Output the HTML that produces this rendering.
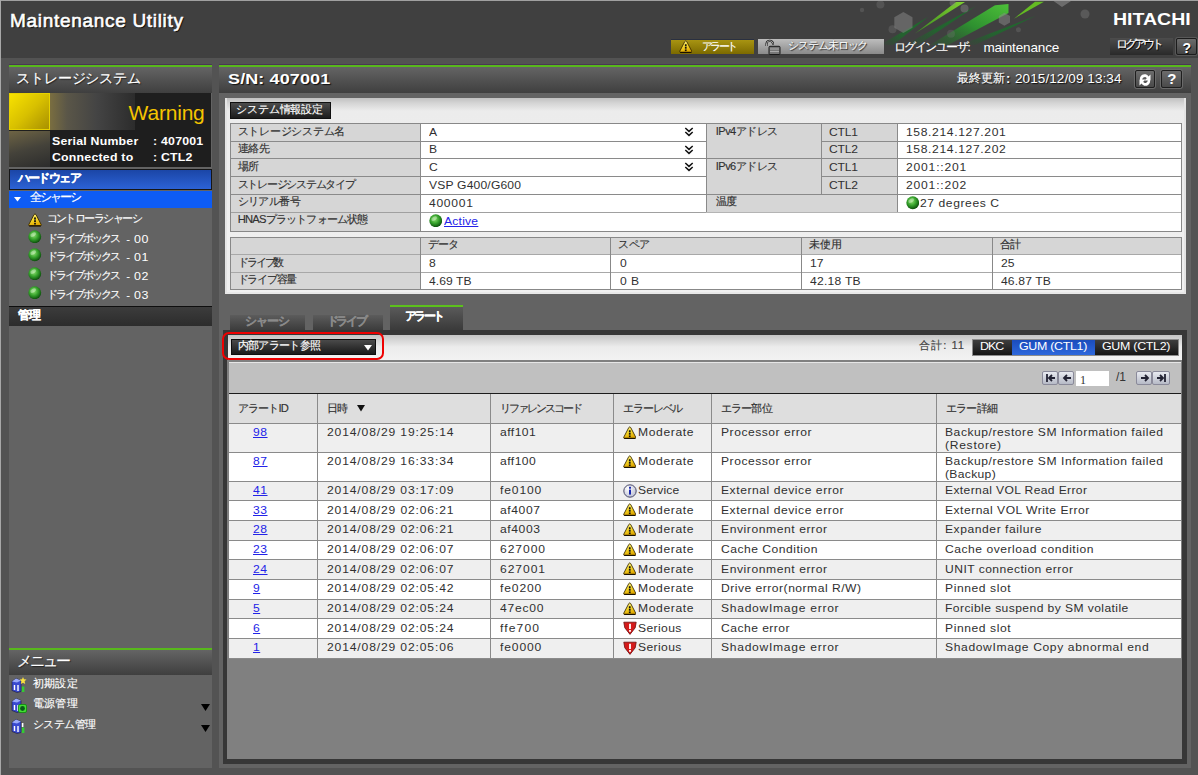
<!DOCTYPE html><html><head><meta charset="utf-8"><style>
*{margin:0;padding:0;box-sizing:border-box}
html,body{width:1198px;height:775px;overflow:hidden;background:#535353;font-family:"Liberation Sans",sans-serif;}
.a{position:absolute;white-space:nowrap}
.t{line-height:1}
.green{background:#58b81c;border-top:0.6px solid #4b3557}
.tbar{background:linear-gradient(#646464,#3f3f3f)}
.lnk{text-decoration:underline}
.sh{text-shadow:1px 1px 1px #111}
</style></head><body>
<div class="a " style="left:0.00px;top:0.00px;width:1198.00px;height:58.00px;background:#404040;border-top:1px solid #a0a0a0;border-left:1px solid #a0a0a0"></div>
<div class="a t " id="t1" style="left:10.00px;top:10.50px;font-size:19px;color:#fff;text-shadow:1px 1px 1px #000;-webkit-text-stroke:0.6px #fff;letter-spacing:0.693px;">Maintenance Utility</div>
<svg class="a" style="left:840px;top:1px" width="260" height="57" viewBox="840 1 260 57">
<defs>
<linearGradient id="gb" x1="0" y1="1" x2="1" y2="0"><stop offset="0" stop-color="#3a8a20"/><stop offset="1" stop-color="#80d030"/></linearGradient>
<linearGradient id="gd" x1="0" y1="1" x2="1" y2="0"><stop offset="0" stop-color="#1e5a28" stop-opacity="0.0"/><stop offset="0.4" stop-color="#1e6a2c" stop-opacity="0.8"/><stop offset="1" stop-color="#1e6a2c"/></linearGradient>
<linearGradient id="gm" x1="0" y1="1" x2="1" y2="0"><stop offset="0" stop-color="#1f6a28" stop-opacity="0.2"/><stop offset="0.5" stop-color="#2e9030"/><stop offset="1" stop-color="#4cc038"/></linearGradient>
</defs>
<polygon points="880,45 893,45 928,17" fill="url(#gd)"/>
<polygon points="915,33.5 956,2 965,2" fill="url(#gb)"/>
<polygon points="905,45 918,45 976,6" fill="url(#gd)"/>
<polygon points="930,45 948,45 1008.5,13 1008.5,4 995,5.3" fill="url(#gm)"/>
<polygon points="960,45 975,45 1036,15.8" fill="url(#gd)"/>
<polygon points="1014,18.7 1044,1.8 1035,1.8" fill="#64bc22"/>
<polygon points="903.4,12 912.5,17.2 912.5,27.7 903.4,33 894.3,27.7 894.3,17.2" fill="#8a8a8a" opacity="0.5"/>
<polygon points="1004.4,12.8 1010,16 1010,22.6 1004.4,25.8 998.8,22.6 998.8,16" fill="#8a8a8a" opacity="0.5"/>
<circle cx="880.4" cy="4.6" r="4" fill="#777" opacity="0.35"/>
<circle cx="892.5" cy="29.2" r="4" fill="#777" opacity="0.35"/>
<circle cx="951" cy="33.8" r="4" fill="#777" opacity="0.3"/>
<circle cx="964.5" cy="8.5" r="4" fill="#888" opacity="0.45"/>
<circle cx="952.6" cy="2.9" r="3" fill="#888" opacity="0.4"/>
<circle cx="1018.4" cy="29.8" r="2.5" fill="#777" opacity="0.35"/>
<circle cx="1085" cy="14" r="4.5" fill="#777" opacity="0.45"/>
<circle cx="862" cy="10" r="2.2" fill="#777" opacity="0.35"/>
<polygon points="1053.5,1 1071,1 1062,7" fill="#8a8a8a" opacity="0.6"/>
</svg>
<div class="a t " style="left:1113.00px;top:12.30px;font-size:16px;font-weight:bold;color:#fff;transform:scaleX(1.22);transform-origin:0 0;">HITACHI</div>
<div class="a " style="left:670.80px;top:38.50px;width:83.60px;height:15.50px;background:linear-gradient(#a89412,#7c6a00);border-top:1px solid #2a3040"></div>
<svg class="a" style="left:678.50px;top:40.00px" width="13.5" height="13.5" viewBox="0 0 14 14"><defs><linearGradient id="wg1" x1="0" y1="0" x2="0.3" y2="1"><stop offset="0" stop-color="#fff9a8"/><stop offset="0.5" stop-color="#f8dc30"/><stop offset="1" stop-color="#e0a800"/></linearGradient></defs><path d="M6,1.6 Q7,0.2 8,1.6 L13.2,11.6 Q13.6,12.8 12.4,12.8 L1.6,12.8 Q0.4,12.8 0.8,11.6 Z" fill="url(#wg1)" stroke="#3a2a00" stroke-width="0.9"/><path d="M1.2,12.9 L12.8,12.9" stroke="#1a1000" stroke-width="1.2"/><rect x="6.1" y="4.4" width="1.8" height="2.2" fill="#111"/><rect x="6.1" y="7.2" width="1.8" height="1.8" fill="#111"/><rect x="6.1" y="9.8" width="1.8" height="1.7" fill="#111"/></svg>
<div class="a t " id="t2" style="left:701.60px;top:40.50px;font-size:11.2px;color:#fff;-webkit-text-stroke:0.15px #fff;letter-spacing:-2.468px;">アラート</div>
<div class="a " style="left:758.00px;top:38.70px;width:126.00px;height:15.20px;background:linear-gradient(#bdbdbd,#8a8a8a)"></div>
<svg class="a" style="left:764.00px;top:38.50px" width="17" height="16" viewBox="0 0 17 16"><path d="M2.5,7 L2.5,4.5 A3.3,3.3 0 0 1 9,4.5 L9,6" fill="none" stroke="#111" stroke-width="2"/><path d="M2.5,7 L2.5,4.5 A3.3,3.3 0 0 1 9,4.5 L9,6" fill="none" stroke="#e8e8e8" stroke-width="0.7"/><rect x="5" y="7.3" width="11" height="8.2" rx="1" fill="#777" stroke="#1a1a1a" stroke-width="1"/><rect x="6" y="9.5" width="9" height="1" fill="#aaa"/><rect x="6" y="12" width="9" height="1" fill="#aaa"/></svg>
<div class="a t " id="t3" style="left:788.30px;top:40.40px;font-size:11.2px;color:#fff;text-shadow:1px 1px 1px #222,0 0 1px #444;-webkit-text-stroke:0.15px #fff;letter-spacing:-1.129px;">システム未ロック</div>
<div class="a t " id="t4" style="left:894.00px;top:42.00px;font-size:11.5px;color:#fff;-webkit-text-stroke:0.15px #fff;letter-spacing:-1.514px;">ログインユーザ:</div>
<div class="a t " id="t5" style="left:983.40px;top:40.70px;font-size:13.5px;color:#fff;letter-spacing:-0.142px;">maintenance</div>
<div class="a " style="left:1110.00px;top:38.00px;width:62.80px;height:16.50px;background:linear-gradient(#4c4c4c,#2a2a2a)"></div>
<div class="a t " id="t6" style="left:1116.00px;top:38.80px;font-size:11.5px;color:#fff;text-shadow:1px 1px 0 #000;-webkit-text-stroke:0.15px #fff;letter-spacing:-3.051px;">ログアウト</div>
<div class="a " style="left:1176.00px;top:38.00px;width:20.60px;height:16.50px;background:linear-gradient(#6c6c6c,#444);border:1px solid #1c1c1c;border-radius:2px;box-shadow:0 0 0 1px #585858"></div>
<div class="a t " style="left:1182.50px;top:40.50px;font-size:14px;font-weight:bold;color:#fff;text-shadow:1px 1px 0 #111;">?</div>
<div class="a " style="left:9.00px;top:65.00px;width:203.00px;height:702.50px;background:#636363"></div>
<div class="a green" style="left:9.00px;top:64.30px;width:203.00px;height:3.30px;"></div>
<div class="a tbar" style="left:9.00px;top:67.00px;width:203.00px;height:26.00px;"></div>
<div class="a t " id="t7" style="left:16.40px;top:71.00px;font-size:14px;color:#fff;text-shadow:1px 1px 1px #222;-webkit-text-stroke:0.15px #fff;letter-spacing:-0.200px;">ストレージシステム</div>
<div class="a " style="left:9.00px;top:93.00px;width:202.00px;height:74.00px;background:#1e1e1e"></div>
<div class="a " style="left:50.00px;top:93.00px;width:85.00px;height:37.00px;background:linear-gradient(90deg,#7a6e40,#5a5648 20%,#444 55%,#2c2c2c)"></div>
<div class="a " style="left:9.00px;top:130.50px;width:41.00px;height:36.50px;background:linear-gradient(165deg,#6e6444,#44423a 50%,#2c2c2c)"></div>
<div class="a " style="left:9.00px;top:93.00px;width:41.00px;height:37.00px;background:linear-gradient(135deg,#f8e200,#d8c000 50%,#a89000);border:1.5px solid #e8d200"></div>
<div class="a t " id="t8" style="left:128.60px;top:102.40px;font-size:21px;color:#f5c400;letter-spacing:-0.203px;">Warning</div>
<div class="a t " style="left:52.30px;top:136.00px;font-size:11px;font-weight:bold;color:#fff;transform:scaleX(1.12);transform-origin:0 0;letter-spacing:0.2px;">Serial Number</div>
<div class="a t " style="left:153.00px;top:136.00px;font-size:11px;font-weight:bold;color:#fff;transform:scaleX(1.12);transform-origin:0 0;letter-spacing:0.2px;">: 407001</div>
<div class="a t " style="left:52.30px;top:152.30px;font-size:11px;font-weight:bold;color:#fff;transform:scaleX(1.12);transform-origin:0 0;letter-spacing:0.2px;">Connected to</div>
<div class="a t " style="left:153.00px;top:152.30px;font-size:11px;font-weight:bold;color:#fff;transform:scaleX(1.12);transform-origin:0 0;letter-spacing:0.2px;">: CTL2</div>
<div class="a " style="left:9.00px;top:169.00px;width:203.00px;height:21.00px;background:linear-gradient(#1b46a6,#2c62d6);border:1px solid #161616"></div>
<div class="a t " id="t9" style="left:17.60px;top:172.00px;font-size:12px;font-weight:bold;color:#fff;-webkit-text-stroke:0.2px #fff;letter-spacing:-1.560px;">ハードウェア</div>
<div class="a " style="left:9.00px;top:190.50px;width:203.00px;height:17.50px;background:#0e5cf4"></div>
<svg class="a" style="left:14.00px;top:196.50px" width="7" height="5" viewBox="0 0 7 5"><polygon points="0,0 7,0 3.5,4.5" fill="#fff"/></svg>
<div class="a t " id="t10" style="left:30.20px;top:192.00px;font-size:11.5px;color:#fff;-webkit-text-stroke:0.15px #fff;letter-spacing:-2.101px;">全シャーシ</div>
<svg class="a" style="left:28.00px;top:213.00px" width="14" height="14" viewBox="0 0 14 14"><defs><linearGradient id="wg2" x1="0" y1="0" x2="0.3" y2="1"><stop offset="0" stop-color="#fff9a8"/><stop offset="0.5" stop-color="#f8dc30"/><stop offset="1" stop-color="#e0a800"/></linearGradient></defs><path d="M6,1.6 Q7,0.2 8,1.6 L13.2,11.6 Q13.6,12.8 12.4,12.8 L1.6,12.8 Q0.4,12.8 0.8,11.6 Z" fill="url(#wg2)" stroke="#3a2a00" stroke-width="0.9"/><path d="M1.2,12.9 L12.8,12.9" stroke="#1a1000" stroke-width="1.2"/><rect x="6.1" y="4.4" width="1.8" height="2.2" fill="#111"/><rect x="6.1" y="7.2" width="1.8" height="1.8" fill="#111"/><rect x="6.1" y="9.8" width="1.8" height="1.7" fill="#111"/></svg>
<div class="a t " id="t11" style="left:46.50px;top:213.00px;font-size:11.2px;color:#fff;-webkit-text-stroke:0.15px #fff;letter-spacing:-1.511px;">コントローラシャーシ</div>
<svg class="a" style="left:28.40px;top:229.50px" width="13.5" height="13.5" viewBox="0 0 13 13"><defs><radialGradient id="gg3" cx="0.42" cy="0.38" r="0.62"><stop offset="0" stop-color="#8ee070"/><stop offset="0.55" stop-color="#34a02a"/><stop offset="1" stop-color="#0c500c"/></radialGradient></defs><circle cx="6.5" cy="6.5" r="6.2" fill="url(#gg3)"/><ellipse cx="5" cy="4.5" rx="3" ry="1.8" fill="#fff" opacity="0.35" transform="rotate(-30 5 4.5)"/></svg>
<div class="a t " id="t12" style="left:46.50px;top:232.50px;font-size:11.2px;color:#fff;-webkit-text-stroke:0.15px #fff;letter-spacing:-1.959px;">ドライブボックス</div>
<div class="a t " style="left:126.30px;top:233.50px;font-size:11.5px;color:#fff;">-</div>
<div class="a t " id="t13" style="left:134.30px;top:233.50px;font-size:11.5px;color:#fff;transform:scaleX(1.08);transform-origin:0 0;letter-spacing:0.530px;">00</div>
<svg class="a" style="left:28.40px;top:248.20px" width="13.5" height="13.5" viewBox="0 0 13 13"><defs><radialGradient id="gg4" cx="0.42" cy="0.38" r="0.62"><stop offset="0" stop-color="#8ee070"/><stop offset="0.55" stop-color="#34a02a"/><stop offset="1" stop-color="#0c500c"/></radialGradient></defs><circle cx="6.5" cy="6.5" r="6.2" fill="url(#gg4)"/><ellipse cx="5" cy="4.5" rx="3" ry="1.8" fill="#fff" opacity="0.35" transform="rotate(-30 5 4.5)"/></svg>
<div class="a t " id="t14" style="left:46.50px;top:251.20px;font-size:11.2px;color:#fff;-webkit-text-stroke:0.15px #fff;letter-spacing:-1.959px;">ドライブボックス</div>
<div class="a t " style="left:126.30px;top:252.20px;font-size:11.5px;color:#fff;">-</div>
<div class="a t " id="t15" style="left:134.30px;top:252.20px;font-size:11.5px;color:#fff;transform:scaleX(1.08);transform-origin:0 0;letter-spacing:0.530px;">01</div>
<svg class="a" style="left:28.40px;top:266.90px" width="13.5" height="13.5" viewBox="0 0 13 13"><defs><radialGradient id="gg5" cx="0.42" cy="0.38" r="0.62"><stop offset="0" stop-color="#8ee070"/><stop offset="0.55" stop-color="#34a02a"/><stop offset="1" stop-color="#0c500c"/></radialGradient></defs><circle cx="6.5" cy="6.5" r="6.2" fill="url(#gg5)"/><ellipse cx="5" cy="4.5" rx="3" ry="1.8" fill="#fff" opacity="0.35" transform="rotate(-30 5 4.5)"/></svg>
<div class="a t " id="t16" style="left:46.50px;top:269.90px;font-size:11.2px;color:#fff;-webkit-text-stroke:0.15px #fff;letter-spacing:-1.957px;">ドライブボックス</div>
<div class="a t " style="left:126.30px;top:270.90px;font-size:11.5px;color:#fff;">-</div>
<div class="a t " id="t17" style="left:134.30px;top:270.90px;font-size:11.5px;color:#fff;transform:scaleX(1.08);transform-origin:0 0;letter-spacing:0.528px;">02</div>
<svg class="a" style="left:28.40px;top:285.60px" width="13.5" height="13.5" viewBox="0 0 13 13"><defs><radialGradient id="gg6" cx="0.42" cy="0.38" r="0.62"><stop offset="0" stop-color="#8ee070"/><stop offset="0.55" stop-color="#34a02a"/><stop offset="1" stop-color="#0c500c"/></radialGradient></defs><circle cx="6.5" cy="6.5" r="6.2" fill="url(#gg6)"/><ellipse cx="5" cy="4.5" rx="3" ry="1.8" fill="#fff" opacity="0.35" transform="rotate(-30 5 4.5)"/></svg>
<div class="a t " id="t18" style="left:46.50px;top:288.60px;font-size:11.2px;color:#fff;-webkit-text-stroke:0.15px #fff;letter-spacing:-1.958px;">ドライブボックス</div>
<div class="a t " style="left:126.30px;top:289.60px;font-size:11.5px;color:#fff;">-</div>
<div class="a t " id="t19" style="left:134.30px;top:289.60px;font-size:11.5px;color:#fff;transform:scaleX(1.08);transform-origin:0 0;letter-spacing:0.532px;">03</div>
<div class="a " style="left:9.00px;top:306.00px;width:203.00px;height:20.00px;background:linear-gradient(#3c3c3c,#2c2c2c);border-top:1px solid #0e0e0e"></div>
<div class="a t " id="t20" style="left:17.50px;top:308.60px;font-size:12px;font-weight:bold;color:#fff;-webkit-text-stroke:0.2px #fff;letter-spacing:-0.209px;">管理</div>
<div class="a " style="left:9.00px;top:648.00px;width:203.00px;height:2.40px;background:#58b81c"></div>
<div class="a tbar" style="left:9.00px;top:650.40px;width:203.00px;height:25.00px;"></div>
<div class="a t " id="t21" style="left:17.30px;top:653.00px;font-size:15px;color:#fff;text-shadow:1px 1px 1px #222;-webkit-text-stroke:0.15px #fff;letter-spacing:-1.934px;">メニュー</div>
<svg class="a" style="left:10.50px;top:677.00px" width="16" height="16" viewBox="0 0 16 16"><polygon points="1,4.5 5,1.5 10,3.5 10,14.5 6,15.5 1,13.5" fill="#3a4ad0" stroke="#1a1a3a" stroke-width="0.6"/><polygon points="1,4.5 5,1.5 10,3.5 6,5.5" fill="#9aaaf8"/><rect x="2.8" y="8" width="1.4" height="5" fill="#fff"/><rect x="6.3" y="8" width="1.4" height="6" fill="#fff"/><polygon points="12,0 13,2.3 15.5,2.6 13.6,4.3 14.2,7 12,5.7 9.8,7 10.4,4.3 8.5,2.6 11,2.3" fill="#f8e040"/><rect x="10.8" y="9.5" width="2.6" height="5.5" fill="#3c3"/></svg>
<div class="a t " id="t22" style="left:32.70px;top:678.00px;font-size:11.2px;color:#fff;-webkit-text-stroke:0.15px #fff;letter-spacing:0.395px;">初期設定</div>
<svg class="a" style="left:10.50px;top:697.00px" width="16" height="16" viewBox="0 0 16 16"><polygon points="1,4.5 5,1.5 10,3.5 10,14.5 6,15.5 1,13.5" fill="#3a4ad0" stroke="#1a1a3a" stroke-width="0.6"/><polygon points="1,4.5 5,1.5 10,3.5 6,5.5" fill="#9aaaf8"/><rect x="2.8" y="8" width="1.4" height="5" fill="#fff"/><rect x="6.3" y="8" width="1.4" height="6" fill="#fff"/><rect x="7.5" y="7.5" width="8" height="8" rx="1.5" fill="#44dd33" stroke="#0a8a0a" stroke-width="0.8"/><circle cx="11.5" cy="11.5" r="2.4" fill="#0a5a1a"/></svg>
<div class="a t " id="t23" style="left:32.70px;top:698.00px;font-size:11.2px;color:#fff;-webkit-text-stroke:0.15px #fff;letter-spacing:0.397px;">電源管理</div>
<svg class="a" style="left:201.00px;top:704.00px" width="9" height="7" viewBox="0 0 9 7"><polygon points="0,0 9,0 4.5,7" fill="#000"/></svg>
<svg class="a" style="left:10.50px;top:718.00px" width="16" height="16" viewBox="0 0 16 16"><polygon points="1,4.5 5,1.5 10,3.5 10,14.5 6,15.5 1,13.5" fill="#3a4ad0" stroke="#1a1a3a" stroke-width="0.6"/><polygon points="1,4.5 5,1.5 10,3.5 6,5.5" fill="#9aaaf8"/><rect x="2.8" y="8" width="1.4" height="5" fill="#fff"/><rect x="6.3" y="8" width="1.4" height="6" fill="#fff"/><rect x="10.8" y="5" width="1.6" height="4" fill="#fff"/><rect x="10.8" y="9.5" width="2.6" height="5.5" fill="#3c3"/></svg>
<div class="a t " id="t24" style="left:32.70px;top:719.00px;font-size:11.2px;color:#fff;-webkit-text-stroke:0.15px #fff;letter-spacing:-0.481px;">システム管理</div>
<svg class="a" style="left:201.00px;top:725.00px" width="9" height="7" viewBox="0 0 9 7"><polygon points="0,0 9,0 4.5,7" fill="#000"/></svg>
<div class="a " style="left:219.00px;top:65.00px;width:972.00px;height:702.50px;background:#636363"></div>
<div class="a green" style="left:219.00px;top:64.30px;width:972.00px;height:3.30px;"></div>
<div class="a tbar" style="left:219.00px;top:67.00px;width:972.00px;height:26.00px;"></div>
<div class="a t " style="left:227.50px;top:71.00px;font-size:15px;font-weight:bold;color:#fff;text-shadow:1px 1px 1px #111;transform:scaleX(1.2);transform-origin:0 0;letter-spacing:0.1px;">S/N: 407001</div>
<div class="a t " id="t25" style="left:957.00px;top:72.40px;font-size:12px;color:#fff;text-shadow:1px 1px 1px #111;-webkit-text-stroke:0.15px #fff;letter-spacing:-0.100px;">最終更新</div>
<div class="a t " style="left:1006.00px;top:72.40px;font-size:13px;font-weight:bold;color:#fff;text-shadow:1px 1px 1px #111;">:</div>
<div class="a t " id="t26" style="left:1014.80px;top:73.40px;font-size:12.5px;color:#fff;text-shadow:1px 1px 1px #111;transform:scaleX(1.08);transform-origin:0 0;letter-spacing:0.085px;">2015/12/09 13:34</div>
<div class="a" style="left:1134.5px;top:69.5px;width:20.5px;height:18.5px;border:1px solid #1e1e1e;border-radius:2px;background:linear-gradient(#6c6c6c,#4a4a4a);box-shadow:0 0 0 1px #6a6a6a"><svg style="position:absolute;left:2.5px;top:2px" width="14" height="14" viewBox="0 0 14 14"><path d="M2.5,8 A4.5,4.5 0 0 1 10.5,3.5 L12.5,1.5 L12.5,7.5 L6.5,7.5 L8.8,5.2 A2.3,2.3 0 0 0 4.8,8 Z" fill="#fff"/><path d="M11.5,6 A4.5,4.5 0 0 1 3.5,10.5 L1.5,12.5 L1.5,6.5 L7.5,6.5 L5.2,8.8 A2.3,2.3 0 0 0 9.2,6 Z" fill="#fff"/></svg></div>
<div class="a" style="left:1161px;top:69.5px;width:20.5px;height:18.5px;border:1px solid #1e1e1e;border-radius:2px;background:linear-gradient(#6c6c6c,#4a4a4a);box-shadow:0 0 0 1px #6a6a6a"></div>
<div class="a t " style="left:1167.20px;top:71.00px;font-size:15px;font-weight:bold;color:#fff;">?</div>
<div class="a " style="left:225.00px;top:97.50px;width:961.00px;height:196.50px;background:linear-gradient(#c0c0c0,#d4d4d4 5px,#ececec 13px,#f0f0f0);border-left:2px solid #e4e4e4;border-right:2px solid #e4e4e4;border-bottom:2px solid #e8e8e8"></div>
<div class="a " style="left:230.00px;top:102.30px;width:101.00px;height:16.50px;background:linear-gradient(#4c4c4c,#1c1c1c);border:1px solid #101010"></div>
<div class="a t " id="t27" style="left:236.20px;top:103.50px;font-size:11.2px;color:#fff;-webkit-text-stroke:0.15px #fff;letter-spacing:-0.144px;">システム情報設定</div>
<div class="a " style="left:229.50px;top:123.00px;width:190.00px;height:108.00px;background:#d6d6d6"></div>
<div class="a " style="left:419.50px;top:123.00px;width:761.50px;height:108.00px;background:#fff"></div>
<div class="a " style="left:706.00px;top:123.00px;width:190.60px;height:88.80px;background:#d6d6d6"></div>
<div class="a " style="left:229.50px;top:123.00px;width:952.50px;height:1.00px;background:#888"></div>
<div class="a " style="left:229.50px;top:140.70px;width:476.50px;height:1.00px;background:#8a8a8a"></div>
<div class="a " style="left:229.50px;top:158.40px;width:476.50px;height:1.00px;background:#8a8a8a"></div>
<div class="a " style="left:229.50px;top:176.10px;width:476.50px;height:1.00px;background:#8a8a8a"></div>
<div class="a " style="left:229.50px;top:193.90px;width:476.50px;height:1.00px;background:#8a8a8a"></div>
<div class="a " style="left:229.50px;top:211.80px;width:476.50px;height:1.00px;background:#a0a0a0"></div>
<div class="a " style="left:820.50px;top:140.70px;width:360.50px;height:1.00px;background:#8a8a8a"></div>
<div class="a " style="left:706.00px;top:158.40px;width:475.00px;height:1.00px;background:#8a8a8a"></div>
<div class="a " style="left:820.50px;top:176.10px;width:360.50px;height:1.00px;background:#8a8a8a"></div>
<div class="a " style="left:706.00px;top:193.90px;width:475.00px;height:1.00px;background:#8a8a8a"></div>
<div class="a " style="left:706.00px;top:211.80px;width:475.00px;height:1.00px;background:#b4b4b4"></div>
<div class="a " style="left:229.50px;top:231.00px;width:952.50px;height:1.00px;background:#888"></div>
<div class="a " style="left:229.50px;top:123.00px;width:1.00px;height:109.00px;background:#888"></div>
<div class="a " style="left:1181.00px;top:123.00px;width:1.00px;height:109.00px;background:#888"></div>
<div class="a " style="left:419.50px;top:123.00px;width:1.00px;height:108.00px;background:#8a8a8a"></div>
<div class="a " style="left:706.00px;top:123.00px;width:1.00px;height:88.80px;background:#8a8a8a"></div>
<div class="a " style="left:820.50px;top:123.00px;width:1.00px;height:70.90px;background:#8a8a8a"></div>
<div class="a " style="left:896.60px;top:123.00px;width:1.00px;height:88.80px;background:#8a8a8a"></div>
<div class="a t " id="t28" style="left:237.70px;top:125.50px;font-size:11.2px;color:#303030;-webkit-text-stroke:0.15px #303030;letter-spacing:-0.256px;">ストレージシステム名</div>
<div class="a t " id="t29" style="left:237.70px;top:143.20px;font-size:11.2px;color:#303030;-webkit-text-stroke:0.15px #303030;letter-spacing:-0.553px;">連絡先</div>
<div class="a t " id="t30" style="left:237.70px;top:160.90px;font-size:11.2px;color:#303030;-webkit-text-stroke:0.15px #303030;letter-spacing:-1.014px;">場所</div>
<div class="a t " id="t31" style="left:237.70px;top:178.60px;font-size:11.2px;color:#303030;-webkit-text-stroke:0.15px #303030;letter-spacing:-1.245px;">ストレージシステムタイプ</div>
<div class="a t " id="t32" style="left:237.70px;top:196.40px;font-size:11.2px;color:#303030;-webkit-text-stroke:0.15px #303030;letter-spacing:-0.600px;">シリアル番号</div>
<div class="a t " id="t33" style="left:237.70px;top:214.30px;font-size:11.2px;color:#303030;-webkit-text-stroke:0.15px #303030;letter-spacing:-0.799px;">HNASプラットフォーム状態</div>
<div class="a t " style="left:429.00px;top:126.60px;font-size:11px;color:#303030;transform:scaleX(1.1);transform-origin:0 0;">A</div>
<div class="a t " style="left:429.00px;top:144.30px;font-size:11px;color:#303030;transform:scaleX(1.1);transform-origin:0 0;">B</div>
<div class="a t " style="left:429.00px;top:162.00px;font-size:11px;color:#303030;transform:scaleX(1.1);transform-origin:0 0;">C</div>
<div class="a t " id="t34" style="left:429.00px;top:179.70px;font-size:11px;color:#303030;transform:scaleX(1.1);transform-origin:0 0;letter-spacing:0.158px;">VSP G400/G600</div>
<div class="a t " id="t35" style="left:429.00px;top:197.50px;font-size:11px;color:#303030;transform:scaleX(1.1);transform-origin:0 0;letter-spacing:0.640px;">400001</div>
<svg class="a" style="left:684.00px;top:126.80px" width="10" height="10" viewBox="0 0 10 10"><path d="M1.3,1 L5,4.4 L8.7,1 M1.3,5 L5,8.4 L8.7,5" fill="none" stroke="#111" stroke-width="1.5"/></svg>
<svg class="a" style="left:684.00px;top:144.50px" width="10" height="10" viewBox="0 0 10 10"><path d="M1.3,1 L5,4.4 L8.7,1 M1.3,5 L5,8.4 L8.7,5" fill="none" stroke="#111" stroke-width="1.5"/></svg>
<svg class="a" style="left:684.00px;top:162.20px" width="10" height="10" viewBox="0 0 10 10"><path d="M1.3,1 L5,4.4 L8.7,1 M1.3,5 L5,8.4 L8.7,5" fill="none" stroke="#111" stroke-width="1.5"/></svg>
<svg class="a" style="left:428.80px;top:213.60px" width="13.5" height="13.5" viewBox="0 0 13 13"><defs><radialGradient id="gg7" cx="0.42" cy="0.38" r="0.62"><stop offset="0" stop-color="#8ee070"/><stop offset="0.55" stop-color="#34a02a"/><stop offset="1" stop-color="#0c500c"/></radialGradient></defs><circle cx="6.5" cy="6.5" r="6.2" fill="url(#gg7)"/><ellipse cx="5" cy="4.5" rx="3" ry="1.8" fill="#fff" opacity="0.35" transform="rotate(-30 5 4.5)"/></svg>
<div class="a t lnk" id="t36" style="left:444.00px;top:215.60px;font-size:11px;color:#2323e8;transform:scaleX(1.1);transform-origin:0 0;letter-spacing:0.209px;">Active</div>
<div class="a t " id="t37" style="left:715.80px;top:125.60px;font-size:11px;color:#303030;-webkit-text-stroke:0.15px #303030;letter-spacing:-0.531px;">IPv4アドレス</div>
<div class="a t " id="t38" style="left:715.80px;top:161.00px;font-size:11px;color:#303030;-webkit-text-stroke:0.15px #303030;letter-spacing:-0.531px;">IPv6アドレス</div>
<div class="a t " id="t39" style="left:715.80px;top:196.40px;font-size:11.2px;color:#303030;-webkit-text-stroke:0.15px #303030;letter-spacing:-1.208px;">温度</div>
<div class="a t " id="t40" style="left:828.80px;top:126.60px;font-size:11px;color:#303030;transform:scaleX(1.1);transform-origin:0 0;letter-spacing:-0.151px;">CTL1</div>
<div class="a t " id="t41" style="left:905.70px;top:126.60px;font-size:11px;color:#303030;transform:scaleX(1.1);transform-origin:0 0;letter-spacing:0.582px;">158.214.127.201</div>
<div class="a t " id="t42" style="left:828.80px;top:144.30px;font-size:11px;color:#303030;transform:scaleX(1.1);transform-origin:0 0;letter-spacing:-0.151px;">CTL2</div>
<div class="a t " id="t43" style="left:905.70px;top:144.30px;font-size:11px;color:#303030;transform:scaleX(1.1);transform-origin:0 0;letter-spacing:0.582px;">158.214.127.202</div>
<div class="a t " id="t44" style="left:828.80px;top:162.00px;font-size:11px;color:#303030;transform:scaleX(1.1);transform-origin:0 0;letter-spacing:-0.150px;">CTL1</div>
<div class="a t " id="t45" style="left:905.70px;top:162.00px;font-size:11px;color:#303030;transform:scaleX(1.1);transform-origin:0 0;letter-spacing:0.734px;">2001::201</div>
<div class="a t " id="t46" style="left:828.80px;top:179.70px;font-size:11px;color:#303030;transform:scaleX(1.1);transform-origin:0 0;letter-spacing:-0.152px;">CTL2</div>
<div class="a t " id="t47" style="left:905.70px;top:179.70px;font-size:11px;color:#303030;transform:scaleX(1.1);transform-origin:0 0;letter-spacing:0.735px;">2001::202</div>
<svg class="a" style="left:905.50px;top:196.10px" width="13.5" height="13.5" viewBox="0 0 13 13"><defs><radialGradient id="gg8" cx="0.42" cy="0.38" r="0.62"><stop offset="0" stop-color="#8ee070"/><stop offset="0.55" stop-color="#34a02a"/><stop offset="1" stop-color="#0c500c"/></radialGradient></defs><circle cx="6.5" cy="6.5" r="6.2" fill="url(#gg8)"/><ellipse cx="5" cy="4.5" rx="3" ry="1.8" fill="#fff" opacity="0.35" transform="rotate(-30 5 4.5)"/></svg>
<div class="a t " id="t48" style="left:920.30px;top:197.50px;font-size:11px;color:#303030;transform:scaleX(1.1);transform-origin:0 0;letter-spacing:0.525px;">27 degrees C</div>
<div class="a " style="left:229.50px;top:236.60px;width:951.50px;height:52.70px;background:#fff"></div>
<div class="a " style="left:229.50px;top:236.60px;width:951.50px;height:17.40px;background:#d6d6d6"></div>
<div class="a " style="left:229.50px;top:236.60px;width:190.00px;height:52.70px;background:#d6d6d6"></div>
<div class="a " style="left:229.50px;top:236.60px;width:952.50px;height:1.00px;background:#888"></div>
<div class="a " style="left:229.50px;top:254.00px;width:952.50px;height:1.00px;background:#a8a8a8"></div>
<div class="a " style="left:229.50px;top:271.90px;width:952.50px;height:1.00px;background:#a8a8a8"></div>
<div class="a " style="left:229.50px;top:289.30px;width:952.50px;height:1.00px;background:#888"></div>
<div class="a " style="left:229.50px;top:236.60px;width:1.00px;height:53.70px;background:#888"></div>
<div class="a " style="left:419.50px;top:236.60px;width:1.00px;height:53.70px;background:#888"></div>
<div class="a " style="left:610.20px;top:236.60px;width:1.00px;height:53.70px;background:#888"></div>
<div class="a " style="left:800.60px;top:236.60px;width:1.00px;height:53.70px;background:#888"></div>
<div class="a " style="left:991.80px;top:236.60px;width:1.00px;height:53.70px;background:#888"></div>
<div class="a " style="left:1181.00px;top:236.60px;width:1.00px;height:53.70px;background:#888"></div>
<div class="a t " id="t49" style="left:427.50px;top:239.10px;font-size:11.2px;color:#303030;-webkit-text-stroke:0.15px #303030;letter-spacing:-0.556px;">データ</div>
<div class="a t " id="t50" style="left:618.20px;top:239.10px;font-size:11.2px;color:#303030;-webkit-text-stroke:0.15px #303030;letter-spacing:-0.551px;">スペア</div>
<div class="a t " id="t51" style="left:808.60px;top:239.10px;font-size:11.2px;color:#303030;-webkit-text-stroke:0.15px #303030;letter-spacing:0.346px;">未使用</div>
<div class="a t " id="t52" style="left:999.80px;top:239.10px;font-size:11.2px;color:#303030;-webkit-text-stroke:0.15px #303030;letter-spacing:-0.807px;">合計</div>
<div class="a t " id="t53" style="left:237.70px;top:256.50px;font-size:11.2px;color:#303030;-webkit-text-stroke:0.15px #303030;letter-spacing:-2.053px;">ドライブ数</div>
<div class="a t " id="t54" style="left:237.70px;top:274.40px;font-size:11.2px;color:#303030;-webkit-text-stroke:0.15px #303030;letter-spacing:-1.280px;">ドライブ容量</div>
<div class="a t " style="left:429.00px;top:257.60px;font-size:11px;color:#303030;transform:scaleX(1.1);transform-origin:0 0;">8</div>
<div class="a t " style="left:619.70px;top:257.60px;font-size:11px;color:#303030;transform:scaleX(1.1);transform-origin:0 0;">0</div>
<div class="a t " style="left:810.10px;top:257.60px;font-size:11px;color:#303030;transform:scaleX(1.1);transform-origin:0 0;">17</div>
<div class="a t " style="left:1001.30px;top:257.60px;font-size:11px;color:#303030;transform:scaleX(1.1);transform-origin:0 0;">25</div>
<div class="a t " id="t55" style="left:429.00px;top:275.50px;font-size:11px;color:#303030;transform:scaleX(1.1);transform-origin:0 0;letter-spacing:0.065px;">4.69 TB</div>
<div class="a t " id="t56" style="left:619.70px;top:275.50px;font-size:11px;color:#303030;transform:scaleX(1.1);transform-origin:0 0;letter-spacing:0.420px;">0 B</div>
<div class="a t " id="t57" style="left:810.10px;top:275.50px;font-size:11px;color:#303030;transform:scaleX(1.1);transform-origin:0 0;letter-spacing:0.234px;">42.18 TB</div>
<div class="a t " id="t58" style="left:1001.30px;top:275.50px;font-size:11px;color:#303030;transform:scaleX(1.1);transform-origin:0 0;letter-spacing:0.132px;">46.87 TB</div>
<div class="a " style="left:230.00px;top:315.00px;width:75.00px;height:15.00px;background:linear-gradient(#5c5c5c,#3c3c3c)"></div>
<div class="a t " id="t59" style="left:245.10px;top:315.50px;font-size:11.5px;font-weight:bold;color:#8a8a8a;-webkit-text-stroke:0.2px #8a8a8a;letter-spacing:-1.167px;">シャーシ</div>
<div class="a " style="left:312.50px;top:315.00px;width:70.50px;height:15.00px;background:linear-gradient(#5c5c5c,#3c3c3c)"></div>
<div class="a t " id="t60" style="left:326.50px;top:315.50px;font-size:11.5px;font-weight:bold;color:#8a8a8a;-webkit-text-stroke:0.2px #8a8a8a;letter-spacing:-2.269px;">ドライブ</div>
<div class="a " style="left:390.00px;top:305.00px;width:72.50px;height:25.00px;background:linear-gradient(#5a5a5a,#3a3a3a);border-top:2px solid #5cc01c"></div>
<div class="a t " id="t61" style="left:405.00px;top:310.80px;font-size:11.5px;font-weight:bold;color:#fff;-webkit-text-stroke:0.2px #fff;letter-spacing:-2.501px;">アラート</div>
<div class="a " style="left:223.00px;top:330.00px;width:964.00px;height:434.00px;background:#373737"></div>
<div class="a " style="left:227.50px;top:334.50px;width:954.50px;height:25.00px;background:linear-gradient(#c4c4c4,#ececec 12px,#f2f2f2)"></div>
<div class="a " style="left:227.00px;top:359.50px;width:955.00px;height:399.50px;background:#808080"></div>
<div class="a " style="left:231.00px;top:338.60px;width:145.00px;height:16.20px;background:linear-gradient(#4a4a4a,#1a1a1a);border:1px solid #0e0e0e"></div>
<div class="a t " id="t62" style="left:237.50px;top:339.50px;font-size:11.2px;color:#fff;-webkit-text-stroke:0.15px #fff;letter-spacing:-0.643px;">内部アラート参照</div>
<svg class="a" style="left:364.00px;top:345.00px" width="8" height="6" viewBox="0 0 8 6"><polygon points="0,0 8,0 4,5.5" fill="#fff"/></svg>
<div class="a " style="left:222.30px;top:332.20px;width:161.70px;height:27.40px;border:2.6px solid #ee0000;border-radius:7px"></div>
<div class="a t " id="t63" style="left:919.40px;top:340.00px;font-size:11.2px;color:#444;-webkit-text-stroke:0.15px #444;letter-spacing:0.954px;">合計: 11</div>
<div class="a " style="left:972.00px;top:338.50px;width:206.50px;height:17.30px;background:#1a1a1a;border:1px solid #8c8c8c"></div>
<div class="a " style="left:973.00px;top:339.50px;width:39.00px;height:15.30px;background:linear-gradient(#3e3e3e,#151515)"></div>
<div class="a " style="left:1012.00px;top:339.50px;width:83.00px;height:15.30px;background:linear-gradient(#1a4cbc,#2e68dc)"></div>
<div class="a " style="left:1095.00px;top:339.50px;width:82.50px;height:15.30px;background:linear-gradient(#3e3e3e,#151515)"></div>
<div class="a t " id="t64" style="left:979.90px;top:341.40px;font-size:11.5px;color:#fff;transform:scaleX(1.08);transform-origin:0 0;letter-spacing:-0.943px;">DKC</div>
<div class="a t " id="t65" style="left:1019.30px;top:341.40px;font-size:11.5px;color:#fff;transform:scaleX(1.08);transform-origin:0 0;letter-spacing:-0.286px;">GUM (CTL1)</div>
<div class="a t " id="t66" style="left:1102.10px;top:341.40px;font-size:11.5px;color:#fff;transform:scaleX(1.08);transform-origin:0 0;letter-spacing:-0.265px;">GUM (CTL2)</div>
<div class="a " style="left:228.50px;top:361.80px;width:952.50px;height:32.20px;background:#c0c0c0;border-top:1px solid #e6e6e6;border-bottom:1.2px solid #1c1c1c"></div>
<div class="a" style="left:1042.3px;top:370.5px;width:16px;height:14px;border:1px solid #8a8a9a;border-radius:2px;background:linear-gradient(#e8eaf0,#b6bac6)"><svg style="position:absolute;left:1.5px;top:1px" width="12" height="10" viewBox="0 0 12 10"><path d="M2,1 L2,9 M10,5 L4,5 M7,2 L4,5 L7,8" fill="none" stroke="#223" stroke-width="1.8"/></svg></div>
<div class="a" style="left:1058.3px;top:370.5px;width:16px;height:14px;border:1px solid #8a8a9a;border-radius:2px;background:linear-gradient(#e8eaf0,#b6bac6)"><svg style="position:absolute;left:1.5px;top:1px" width="12" height="10" viewBox="0 0 12 10"><path d="M10,5 L3,5 M6,2 L3,5 L6,8" fill="none" stroke="#223" stroke-width="1.8"/></svg></div>
<div class="a " style="left:1076.00px;top:370.80px;width:32.80px;height:15.60px;background:#fff"></div>
<div class="a t " style="left:1080.00px;top:373.70px;font-size:12px;color:#333;font-family:'Liberation Serif',serif;">1</div>
<div class="a t " style="left:1116.00px;top:371.00px;font-size:12px;color:#333;">/1</div>
<div class="a" style="left:1136px;top:370.5px;width:16px;height:14px;border:1px solid #8a8a9a;border-radius:2px;background:linear-gradient(#e8eaf0,#b6bac6)"><svg style="position:absolute;left:1.5px;top:1px" width="12" height="10" viewBox="0 0 12 10"><path d="M2,5 L9,5 M6,2 L9,5 L6,8" fill="none" stroke="#223" stroke-width="1.8"/></svg></div>
<div class="a" style="left:1152px;top:370.5px;width:17.5px;height:14px;border:1px solid #8a8a9a;border-radius:2px;background:linear-gradient(#e8eaf0,#b6bac6)"><svg style="position:absolute;left:1.5px;top:1px" width="12" height="10" viewBox="0 0 12 10"><path d="M2,5 L8,5 M5,2 L8,5 L5,8 M10,1 L10,9" fill="none" stroke="#223" stroke-width="1.8"/></svg></div>
<div class="a " style="left:228.50px;top:394.00px;width:952.10px;height:29.20px;background:#dedede"></div>
<div class="a " style="left:228.50px;top:423.20px;width:952.10px;height:29.00px;background:#efefef"></div>
<div class="a " style="left:228.50px;top:452.20px;width:952.10px;height:29.00px;background:#ffffff"></div>
<div class="a " style="left:228.50px;top:481.20px;width:952.10px;height:19.67px;background:#efefef"></div>
<div class="a " style="left:228.50px;top:500.87px;width:952.10px;height:19.67px;background:#ffffff"></div>
<div class="a " style="left:228.50px;top:520.54px;width:952.10px;height:19.67px;background:#efefef"></div>
<div class="a " style="left:228.50px;top:540.21px;width:952.10px;height:19.67px;background:#ffffff"></div>
<div class="a " style="left:228.50px;top:559.88px;width:952.10px;height:19.67px;background:#efefef"></div>
<div class="a " style="left:228.50px;top:579.55px;width:952.10px;height:19.67px;background:#ffffff"></div>
<div class="a " style="left:228.50px;top:599.22px;width:952.10px;height:19.67px;background:#efefef"></div>
<div class="a " style="left:228.50px;top:618.89px;width:952.10px;height:19.67px;background:#ffffff"></div>
<div class="a " style="left:228.50px;top:638.56px;width:952.10px;height:19.67px;background:#efefef"></div>
<div class="a " style="left:228.50px;top:422.70px;width:952.10px;height:1.00px;background:#8a8a8a"></div>
<div class="a " style="left:228.50px;top:451.70px;width:952.10px;height:1.00px;background:#8a8a8a"></div>
<div class="a " style="left:228.50px;top:480.70px;width:952.10px;height:1.00px;background:#8a8a8a"></div>
<div class="a " style="left:228.50px;top:500.37px;width:952.10px;height:1.00px;background:#8a8a8a"></div>
<div class="a " style="left:228.50px;top:520.04px;width:952.10px;height:1.00px;background:#8a8a8a"></div>
<div class="a " style="left:228.50px;top:539.71px;width:952.10px;height:1.00px;background:#8a8a8a"></div>
<div class="a " style="left:228.50px;top:559.38px;width:952.10px;height:1.00px;background:#8a8a8a"></div>
<div class="a " style="left:228.50px;top:579.05px;width:952.10px;height:1.00px;background:#8a8a8a"></div>
<div class="a " style="left:228.50px;top:598.72px;width:952.10px;height:1.00px;background:#8a8a8a"></div>
<div class="a " style="left:228.50px;top:618.39px;width:952.10px;height:1.00px;background:#8a8a8a"></div>
<div class="a " style="left:228.50px;top:638.06px;width:952.10px;height:1.00px;background:#8a8a8a"></div>
<div class="a " style="left:228.50px;top:657.73px;width:952.10px;height:1.00px;background:#8a8a8a"></div>
<div class="a " style="left:316.90px;top:394.00px;width:1.00px;height:264.23px;background:#8a8a8a"></div>
<div class="a " style="left:490.10px;top:394.00px;width:1.00px;height:264.23px;background:#8a8a8a"></div>
<div class="a " style="left:612.70px;top:394.00px;width:1.00px;height:264.23px;background:#8a8a8a"></div>
<div class="a " style="left:710.80px;top:394.00px;width:1.00px;height:264.23px;background:#8a8a8a"></div>
<div class="a " style="left:935.90px;top:394.00px;width:1.00px;height:264.23px;background:#8a8a8a"></div>
<div class="a t " id="t67" style="left:238.00px;top:403.00px;font-size:11.2px;color:#303030;-webkit-text-stroke:0.15px #303030;letter-spacing:-0.878px;">アラートID</div>
<div class="a t " id="t68" style="left:326.90px;top:403.00px;font-size:11.2px;color:#303030;-webkit-text-stroke:0.15px #303030;letter-spacing:-0.600px;">日時</div>
<div class="a t " id="t69" style="left:500.10px;top:403.00px;font-size:11.2px;color:#303030;-webkit-text-stroke:0.15px #303030;letter-spacing:-2.064px;">リファレンスコード</div>
<div class="a t " id="t70" style="left:622.70px;top:403.00px;font-size:11.2px;color:#303030;-webkit-text-stroke:0.15px #303030;letter-spacing:-1.040px;">エラーレベル</div>
<div class="a t " id="t71" style="left:720.80px;top:403.00px;font-size:11.2px;color:#303030;-webkit-text-stroke:0.15px #303030;letter-spacing:-0.777px;">エラー部位</div>
<div class="a t " id="t72" style="left:945.90px;top:403.00px;font-size:11.2px;color:#303030;-webkit-text-stroke:0.15px #303030;letter-spacing:-0.751px;">エラー詳細</div>
<svg class="a" style="left:356.90px;top:405.00px" width="8" height="6.5" viewBox="0 0 8 6.5"><polygon points="0,0 8,0 4,6.5" fill="#111"/></svg>
<div class="a t lnk" id="t73" style="left:253.00px;top:426.90px;font-size:11px;color:#2323e8;transform:scaleX(1.1);transform-origin:0 0;letter-spacing:0.491px;">98</div>
<div class="a t " id="t74" style="left:326.80px;top:426.90px;font-size:11px;color:#303030;transform:scaleX(1.1);transform-origin:0 0;letter-spacing:0.781px;">2014/08/29 19:25:14</div>
<div class="a t " id="t75" style="left:500.40px;top:426.90px;font-size:11px;color:#303030;transform:scaleX(1.1);transform-origin:0 0;letter-spacing:0.431px;">aff101</div>
<svg class="a" style="left:622.60px;top:425.80px" width="13.5" height="13.5" viewBox="0 0 14 14"><defs><linearGradient id="wg9" x1="0" y1="0" x2="0.3" y2="1"><stop offset="0" stop-color="#fff9a8"/><stop offset="0.5" stop-color="#f8dc30"/><stop offset="1" stop-color="#e0a800"/></linearGradient></defs><path d="M6,1.6 Q7,0.2 8,1.6 L13.2,11.6 Q13.6,12.8 12.4,12.8 L1.6,12.8 Q0.4,12.8 0.8,11.6 Z" fill="url(#wg9)" stroke="#3a2a00" stroke-width="0.9"/><path d="M1.2,12.9 L12.8,12.9" stroke="#1a1000" stroke-width="1.2"/><rect x="6.1" y="4.4" width="1.8" height="2.2" fill="#111"/><rect x="6.1" y="7.2" width="1.8" height="1.8" fill="#111"/><rect x="6.1" y="9.8" width="1.8" height="1.7" fill="#111"/></svg>
<div class="a t " id="t76" style="left:637.50px;top:426.90px;font-size:11px;color:#303030;transform:scaleX(1.1);transform-origin:0 0;letter-spacing:0.569px;">Moderate</div>
<div class="a t " id="t77" style="left:720.80px;top:426.90px;font-size:11px;color:#303030;transform:scaleX(1.1);transform-origin:0 0;letter-spacing:0.469px;">Processor error</div>
<div class="a t " id="t78" style="left:945.20px;top:426.90px;font-size:11px;color:#303030;transform:scaleX(1.1);transform-origin:0 0;letter-spacing:0.491px;">Backup/restore SM Information failed</div>
<div class="a t " id="t79" style="left:945.20px;top:439.60px;font-size:11px;color:#303030;transform:scaleX(1.1);transform-origin:0 0;letter-spacing:0.643px;">(Restore)</div>
<div class="a t lnk" id="t80" style="left:253.00px;top:455.90px;font-size:11px;color:#2323e8;transform:scaleX(1.1);transform-origin:0 0;letter-spacing:0.491px;">87</div>
<div class="a t " id="t81" style="left:326.80px;top:455.90px;font-size:11px;color:#303030;transform:scaleX(1.1);transform-origin:0 0;letter-spacing:0.781px;">2014/08/29 16:33:34</div>
<div class="a t " id="t82" style="left:500.40px;top:455.90px;font-size:11px;color:#303030;transform:scaleX(1.1);transform-origin:0 0;letter-spacing:0.432px;">aff100</div>
<svg class="a" style="left:622.60px;top:454.80px" width="13.5" height="13.5" viewBox="0 0 14 14"><defs><linearGradient id="wg10" x1="0" y1="0" x2="0.3" y2="1"><stop offset="0" stop-color="#fff9a8"/><stop offset="0.5" stop-color="#f8dc30"/><stop offset="1" stop-color="#e0a800"/></linearGradient></defs><path d="M6,1.6 Q7,0.2 8,1.6 L13.2,11.6 Q13.6,12.8 12.4,12.8 L1.6,12.8 Q0.4,12.8 0.8,11.6 Z" fill="url(#wg10)" stroke="#3a2a00" stroke-width="0.9"/><path d="M1.2,12.9 L12.8,12.9" stroke="#1a1000" stroke-width="1.2"/><rect x="6.1" y="4.4" width="1.8" height="2.2" fill="#111"/><rect x="6.1" y="7.2" width="1.8" height="1.8" fill="#111"/><rect x="6.1" y="9.8" width="1.8" height="1.7" fill="#111"/></svg>
<div class="a t " id="t83" style="left:637.50px;top:455.90px;font-size:11px;color:#303030;transform:scaleX(1.1);transform-origin:0 0;letter-spacing:0.569px;">Moderate</div>
<div class="a t " id="t84" style="left:720.80px;top:455.90px;font-size:11px;color:#303030;transform:scaleX(1.1);transform-origin:0 0;letter-spacing:0.469px;">Processor error</div>
<div class="a t " id="t85" style="left:945.20px;top:455.90px;font-size:11px;color:#303030;transform:scaleX(1.1);transform-origin:0 0;letter-spacing:0.492px;">Backup/restore SM Information failed</div>
<div class="a t " id="t86" style="left:945.20px;top:468.60px;font-size:11px;color:#303030;transform:scaleX(1.1);transform-origin:0 0;letter-spacing:0.295px;">(Backup)</div>
<div class="a t lnk" id="t87" style="left:253.00px;top:484.90px;font-size:11px;color:#2323e8;transform:scaleX(1.1);transform-origin:0 0;letter-spacing:0.489px;">41</div>
<div class="a t " id="t88" style="left:326.80px;top:484.90px;font-size:11px;color:#303030;transform:scaleX(1.1);transform-origin:0 0;letter-spacing:0.781px;">2014/08/29 03:17:09</div>
<div class="a t " id="t89" style="left:500.40px;top:484.90px;font-size:11px;color:#303030;transform:scaleX(1.1);transform-origin:0 0;letter-spacing:0.780px;">fe0100</div>
<svg class="a" style="left:622.60px;top:483.80px" width="14" height="14" viewBox="0 0 14 14"><defs><radialGradient id="ig" cx="0.35" cy="0.3" r="0.8"><stop offset="0" stop-color="#ffffff"/><stop offset="1" stop-color="#b8bcd0"/></radialGradient></defs><circle cx="7" cy="7" r="6.2" fill="url(#ig)" stroke="#4a4a6a" stroke-width="1"/><rect x="6" y="5.6" width="2" height="5" fill="#1a28b0"/><rect x="6" y="2.8" width="2" height="1.9" fill="#1a28b0"/></svg>
<div class="a t " id="t90" style="left:637.50px;top:484.90px;font-size:11px;color:#303030;transform:scaleX(1.1);transform-origin:0 0;letter-spacing:0.143px;">Service</div>
<div class="a t " id="t91" style="left:720.80px;top:484.90px;font-size:11px;color:#303030;transform:scaleX(1.1);transform-origin:0 0;letter-spacing:0.498px;">External device error</div>
<div class="a t " id="t92" style="left:945.20px;top:484.90px;font-size:11px;color:#303030;transform:scaleX(1.1);transform-origin:0 0;letter-spacing:0.328px;">External VOL Read Error</div>
<div class="a t lnk" id="t93" style="left:253.00px;top:504.57px;font-size:11px;color:#2323e8;transform:scaleX(1.1);transform-origin:0 0;letter-spacing:0.489px;">33</div>
<div class="a t " id="t94" style="left:326.80px;top:504.57px;font-size:11px;color:#303030;transform:scaleX(1.1);transform-origin:0 0;letter-spacing:0.782px;">2014/08/29 02:06:21</div>
<div class="a t " id="t95" style="left:500.40px;top:504.57px;font-size:11px;color:#303030;transform:scaleX(1.1);transform-origin:0 0;letter-spacing:0.543px;">af4007</div>
<svg class="a" style="left:622.60px;top:503.47px" width="13.5" height="13.5" viewBox="0 0 14 14"><defs><linearGradient id="wg11" x1="0" y1="0" x2="0.3" y2="1"><stop offset="0" stop-color="#fff9a8"/><stop offset="0.5" stop-color="#f8dc30"/><stop offset="1" stop-color="#e0a800"/></linearGradient></defs><path d="M6,1.6 Q7,0.2 8,1.6 L13.2,11.6 Q13.6,12.8 12.4,12.8 L1.6,12.8 Q0.4,12.8 0.8,11.6 Z" fill="url(#wg11)" stroke="#3a2a00" stroke-width="0.9"/><path d="M1.2,12.9 L12.8,12.9" stroke="#1a1000" stroke-width="1.2"/><rect x="6.1" y="4.4" width="1.8" height="2.2" fill="#111"/><rect x="6.1" y="7.2" width="1.8" height="1.8" fill="#111"/><rect x="6.1" y="9.8" width="1.8" height="1.7" fill="#111"/></svg>
<div class="a t " id="t96" style="left:637.50px;top:504.57px;font-size:11px;color:#303030;transform:scaleX(1.1);transform-origin:0 0;letter-spacing:0.569px;">Moderate</div>
<div class="a t " id="t97" style="left:720.80px;top:504.57px;font-size:11px;color:#303030;transform:scaleX(1.1);transform-origin:0 0;letter-spacing:0.498px;">External device error</div>
<div class="a t " id="t98" style="left:945.20px;top:504.57px;font-size:11px;color:#303030;transform:scaleX(1.1);transform-origin:0 0;letter-spacing:0.437px;">External VOL Write Error</div>
<div class="a t lnk" id="t99" style="left:253.00px;top:524.24px;font-size:11px;color:#2323e8;transform:scaleX(1.1);transform-origin:0 0;letter-spacing:0.488px;">28</div>
<div class="a t " id="t100" style="left:326.80px;top:524.24px;font-size:11px;color:#303030;transform:scaleX(1.1);transform-origin:0 0;letter-spacing:0.782px;">2014/08/29 02:06:21</div>
<div class="a t " id="t101" style="left:500.40px;top:524.24px;font-size:11px;color:#303030;transform:scaleX(1.1);transform-origin:0 0;letter-spacing:0.543px;">af4003</div>
<svg class="a" style="left:622.60px;top:523.14px" width="13.5" height="13.5" viewBox="0 0 14 14"><defs><linearGradient id="wg12" x1="0" y1="0" x2="0.3" y2="1"><stop offset="0" stop-color="#fff9a8"/><stop offset="0.5" stop-color="#f8dc30"/><stop offset="1" stop-color="#e0a800"/></linearGradient></defs><path d="M6,1.6 Q7,0.2 8,1.6 L13.2,11.6 Q13.6,12.8 12.4,12.8 L1.6,12.8 Q0.4,12.8 0.8,11.6 Z" fill="url(#wg12)" stroke="#3a2a00" stroke-width="0.9"/><path d="M1.2,12.9 L12.8,12.9" stroke="#1a1000" stroke-width="1.2"/><rect x="6.1" y="4.4" width="1.8" height="2.2" fill="#111"/><rect x="6.1" y="7.2" width="1.8" height="1.8" fill="#111"/><rect x="6.1" y="9.8" width="1.8" height="1.7" fill="#111"/></svg>
<div class="a t " id="t102" style="left:637.50px;top:524.24px;font-size:11px;color:#303030;transform:scaleX(1.1);transform-origin:0 0;letter-spacing:0.569px;">Moderate</div>
<div class="a t " id="t103" style="left:720.80px;top:524.24px;font-size:11px;color:#303030;transform:scaleX(1.1);transform-origin:0 0;letter-spacing:0.520px;">Environment error</div>
<div class="a t " id="t104" style="left:945.20px;top:524.24px;font-size:11px;color:#303030;transform:scaleX(1.1);transform-origin:0 0;letter-spacing:0.501px;">Expander failure</div>
<div class="a t lnk" id="t105" style="left:253.00px;top:543.91px;font-size:11px;color:#2323e8;transform:scaleX(1.1);transform-origin:0 0;letter-spacing:0.485px;">23</div>
<div class="a t " id="t106" style="left:326.80px;top:543.91px;font-size:11px;color:#303030;transform:scaleX(1.1);transform-origin:0 0;letter-spacing:0.781px;">2014/08/29 02:06:07</div>
<div class="a t " id="t107" style="left:500.40px;top:543.91px;font-size:11px;color:#303030;transform:scaleX(1.1);transform-origin:0 0;letter-spacing:0.858px;">627000</div>
<svg class="a" style="left:622.60px;top:542.81px" width="13.5" height="13.5" viewBox="0 0 14 14"><defs><linearGradient id="wg13" x1="0" y1="0" x2="0.3" y2="1"><stop offset="0" stop-color="#fff9a8"/><stop offset="0.5" stop-color="#f8dc30"/><stop offset="1" stop-color="#e0a800"/></linearGradient></defs><path d="M6,1.6 Q7,0.2 8,1.6 L13.2,11.6 Q13.6,12.8 12.4,12.8 L1.6,12.8 Q0.4,12.8 0.8,11.6 Z" fill="url(#wg13)" stroke="#3a2a00" stroke-width="0.9"/><path d="M1.2,12.9 L12.8,12.9" stroke="#1a1000" stroke-width="1.2"/><rect x="6.1" y="4.4" width="1.8" height="2.2" fill="#111"/><rect x="6.1" y="7.2" width="1.8" height="1.8" fill="#111"/><rect x="6.1" y="9.8" width="1.8" height="1.7" fill="#111"/></svg>
<div class="a t " id="t108" style="left:637.50px;top:543.91px;font-size:11px;color:#303030;transform:scaleX(1.1);transform-origin:0 0;letter-spacing:0.569px;">Moderate</div>
<div class="a t " id="t109" style="left:720.80px;top:543.91px;font-size:11px;color:#303030;transform:scaleX(1.1);transform-origin:0 0;letter-spacing:0.450px;">Cache Condition</div>
<div class="a t " id="t110" style="left:945.20px;top:543.91px;font-size:11px;color:#303030;transform:scaleX(1.1);transform-origin:0 0;letter-spacing:0.468px;">Cache overload condition</div>
<div class="a t lnk" id="t111" style="left:253.00px;top:563.58px;font-size:11px;color:#2323e8;transform:scaleX(1.1);transform-origin:0 0;letter-spacing:0.488px;">24</div>
<div class="a t " id="t112" style="left:326.80px;top:563.58px;font-size:11px;color:#303030;transform:scaleX(1.1);transform-origin:0 0;letter-spacing:0.781px;">2014/08/29 02:06:07</div>
<div class="a t " id="t113" style="left:500.40px;top:563.58px;font-size:11px;color:#303030;transform:scaleX(1.1);transform-origin:0 0;letter-spacing:0.856px;">627001</div>
<svg class="a" style="left:622.60px;top:562.48px" width="13.5" height="13.5" viewBox="0 0 14 14"><defs><linearGradient id="wg14" x1="0" y1="0" x2="0.3" y2="1"><stop offset="0" stop-color="#fff9a8"/><stop offset="0.5" stop-color="#f8dc30"/><stop offset="1" stop-color="#e0a800"/></linearGradient></defs><path d="M6,1.6 Q7,0.2 8,1.6 L13.2,11.6 Q13.6,12.8 12.4,12.8 L1.6,12.8 Q0.4,12.8 0.8,11.6 Z" fill="url(#wg14)" stroke="#3a2a00" stroke-width="0.9"/><path d="M1.2,12.9 L12.8,12.9" stroke="#1a1000" stroke-width="1.2"/><rect x="6.1" y="4.4" width="1.8" height="2.2" fill="#111"/><rect x="6.1" y="7.2" width="1.8" height="1.8" fill="#111"/><rect x="6.1" y="9.8" width="1.8" height="1.7" fill="#111"/></svg>
<div class="a t " id="t114" style="left:637.50px;top:563.58px;font-size:11px;color:#303030;transform:scaleX(1.1);transform-origin:0 0;letter-spacing:0.569px;">Moderate</div>
<div class="a t " id="t115" style="left:720.80px;top:563.58px;font-size:11px;color:#303030;transform:scaleX(1.1);transform-origin:0 0;letter-spacing:0.520px;">Environment error</div>
<div class="a t " id="t116" style="left:945.20px;top:563.58px;font-size:11px;color:#303030;transform:scaleX(1.1);transform-origin:0 0;letter-spacing:0.418px;">UNIT connection error</div>
<div class="a t lnk" id="t117" style="left:253.00px;top:583.25px;font-size:11px;color:#2323e8;transform:scaleX(1.1);transform-origin:0 0;letter-spacing:0.418px;">9</div>
<div class="a t " id="t118" style="left:326.80px;top:583.25px;font-size:11px;color:#303030;transform:scaleX(1.1);transform-origin:0 0;letter-spacing:0.782px;">2014/08/29 02:05:42</div>
<div class="a t " id="t119" style="left:500.40px;top:583.25px;font-size:11px;color:#303030;transform:scaleX(1.1);transform-origin:0 0;letter-spacing:0.778px;">fe0200</div>
<svg class="a" style="left:622.60px;top:582.15px" width="13.5" height="13.5" viewBox="0 0 14 14"><defs><linearGradient id="wg15" x1="0" y1="0" x2="0.3" y2="1"><stop offset="0" stop-color="#fff9a8"/><stop offset="0.5" stop-color="#f8dc30"/><stop offset="1" stop-color="#e0a800"/></linearGradient></defs><path d="M6,1.6 Q7,0.2 8,1.6 L13.2,11.6 Q13.6,12.8 12.4,12.8 L1.6,12.8 Q0.4,12.8 0.8,11.6 Z" fill="url(#wg15)" stroke="#3a2a00" stroke-width="0.9"/><path d="M1.2,12.9 L12.8,12.9" stroke="#1a1000" stroke-width="1.2"/><rect x="6.1" y="4.4" width="1.8" height="2.2" fill="#111"/><rect x="6.1" y="7.2" width="1.8" height="1.8" fill="#111"/><rect x="6.1" y="9.8" width="1.8" height="1.7" fill="#111"/></svg>
<div class="a t " id="t120" style="left:637.50px;top:583.25px;font-size:11px;color:#303030;transform:scaleX(1.1);transform-origin:0 0;letter-spacing:0.569px;">Moderate</div>
<div class="a t " id="t121" style="left:720.80px;top:583.25px;font-size:11px;color:#303030;transform:scaleX(1.1);transform-origin:0 0;letter-spacing:0.451px;">Drive error(normal R/W)</div>
<div class="a t " id="t122" style="left:945.20px;top:583.25px;font-size:11px;color:#303030;transform:scaleX(1.1);transform-origin:0 0;letter-spacing:0.530px;">Pinned slot</div>
<div class="a t lnk" id="t123" style="left:253.00px;top:602.92px;font-size:11px;color:#2323e8;transform:scaleX(1.1);transform-origin:0 0;letter-spacing:0.423px;">5</div>
<div class="a t " id="t124" style="left:326.80px;top:602.92px;font-size:11px;color:#303030;transform:scaleX(1.1);transform-origin:0 0;letter-spacing:0.781px;">2014/08/29 02:05:24</div>
<div class="a t " id="t125" style="left:500.40px;top:602.92px;font-size:11px;color:#303030;transform:scaleX(1.1);transform-origin:0 0;letter-spacing:0.672px;">47ec00</div>
<svg class="a" style="left:622.60px;top:601.82px" width="13.5" height="13.5" viewBox="0 0 14 14"><defs><linearGradient id="wg16" x1="0" y1="0" x2="0.3" y2="1"><stop offset="0" stop-color="#fff9a8"/><stop offset="0.5" stop-color="#f8dc30"/><stop offset="1" stop-color="#e0a800"/></linearGradient></defs><path d="M6,1.6 Q7,0.2 8,1.6 L13.2,11.6 Q13.6,12.8 12.4,12.8 L1.6,12.8 Q0.4,12.8 0.8,11.6 Z" fill="url(#wg16)" stroke="#3a2a00" stroke-width="0.9"/><path d="M1.2,12.9 L12.8,12.9" stroke="#1a1000" stroke-width="1.2"/><rect x="6.1" y="4.4" width="1.8" height="2.2" fill="#111"/><rect x="6.1" y="7.2" width="1.8" height="1.8" fill="#111"/><rect x="6.1" y="9.8" width="1.8" height="1.7" fill="#111"/></svg>
<div class="a t " id="t126" style="left:637.50px;top:602.92px;font-size:11px;color:#303030;transform:scaleX(1.1);transform-origin:0 0;letter-spacing:0.569px;">Moderate</div>
<div class="a t " id="t127" style="left:720.80px;top:602.92px;font-size:11px;color:#303030;transform:scaleX(1.1);transform-origin:0 0;letter-spacing:0.644px;">ShadowImage error</div>
<div class="a t " id="t128" style="left:945.20px;top:602.92px;font-size:11px;color:#303030;transform:scaleX(1.1);transform-origin:0 0;letter-spacing:0.378px;">Forcible suspend by SM volatile</div>
<div class="a t lnk" id="t129" style="left:253.00px;top:622.59px;font-size:11px;color:#2323e8;transform:scaleX(1.1);transform-origin:0 0;letter-spacing:0.426px;">6</div>
<div class="a t " id="t130" style="left:326.80px;top:622.59px;font-size:11px;color:#303030;transform:scaleX(1.1);transform-origin:0 0;letter-spacing:0.782px;">2014/08/29 02:05:24</div>
<div class="a t " id="t131" style="left:500.40px;top:622.59px;font-size:11px;color:#303030;transform:scaleX(1.1);transform-origin:0 0;letter-spacing:1.012px;">ffe700</div>
<svg class="a" style="left:622.60px;top:621.49px" width="14" height="14" viewBox="0 0 14 14"><path d="M0.8,1.2 L13.2,1.2 L12.2,6.8 L7,13.4 L1.8,6.8 Z" fill="#d41a1a" stroke="#6a0a0a" stroke-width="0.8"/><rect x="6.1" y="2.8" width="1.8" height="5.2" fill="#fff"/><rect x="6.1" y="9" width="1.8" height="1.8" fill="#fff"/></svg>
<div class="a t " id="t132" style="left:637.50px;top:622.59px;font-size:11px;color:#303030;transform:scaleX(1.1);transform-origin:0 0;letter-spacing:0.359px;">Serious</div>
<div class="a t " id="t133" style="left:720.80px;top:622.59px;font-size:11px;color:#303030;transform:scaleX(1.1);transform-origin:0 0;letter-spacing:0.428px;">Cache error</div>
<div class="a t " id="t134" style="left:945.20px;top:622.59px;font-size:11px;color:#303030;transform:scaleX(1.1);transform-origin:0 0;letter-spacing:0.530px;">Pinned slot</div>
<div class="a t lnk" id="t135" style="left:253.00px;top:642.26px;font-size:11px;color:#2323e8;transform:scaleX(1.1);transform-origin:0 0;letter-spacing:0.423px;">1</div>
<div class="a t " id="t136" style="left:326.80px;top:642.26px;font-size:11px;color:#303030;transform:scaleX(1.1);transform-origin:0 0;letter-spacing:0.781px;">2014/08/29 02:05:06</div>
<div class="a t " id="t137" style="left:500.40px;top:642.26px;font-size:11px;color:#303030;transform:scaleX(1.1);transform-origin:0 0;letter-spacing:0.778px;">fe0000</div>
<svg class="a" style="left:622.60px;top:641.16px" width="14" height="14" viewBox="0 0 14 14"><path d="M0.8,1.2 L13.2,1.2 L12.2,6.8 L7,13.4 L1.8,6.8 Z" fill="#d41a1a" stroke="#6a0a0a" stroke-width="0.8"/><rect x="6.1" y="2.8" width="1.8" height="5.2" fill="#fff"/><rect x="6.1" y="9" width="1.8" height="1.8" fill="#fff"/></svg>
<div class="a t " id="t138" style="left:637.50px;top:642.26px;font-size:11px;color:#303030;transform:scaleX(1.1);transform-origin:0 0;letter-spacing:0.360px;">Serious</div>
<div class="a t " id="t139" style="left:720.80px;top:642.26px;font-size:11px;color:#303030;transform:scaleX(1.1);transform-origin:0 0;letter-spacing:0.644px;">ShadowImage error</div>
<div class="a t " id="t140" style="left:945.20px;top:642.26px;font-size:11px;color:#303030;transform:scaleX(1.1);transform-origin:0 0;letter-spacing:0.564px;">ShadowImage Copy abnormal end</div>
<div class="a " style="left:0.00px;top:0.00px;width:1.40px;height:775.00px;background:#a8a8a8"></div>
</body></html>
